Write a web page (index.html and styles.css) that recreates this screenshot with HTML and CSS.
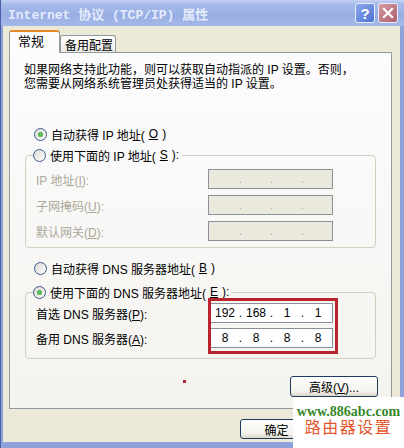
FILE: index.html
```html
<!DOCTYPE html>
<html lang="zh-CN">
<head>
    <meta charset="UTF-8">
    <meta name="viewport" content="width=device-width, initial-scale=1.0">
    <title>Internet 协议 (TCP/IP) 属性</title>
    <link rel="stylesheet" href="styles.css">
</head>
<body>
    <div class="window">
        <div class="titlebar">
            <span class="title">Internet 协议 (TCP/IP) 属性</span>
            <span class="tb-btn help">?</span>
            <span class="tb-btn close">
                <svg width="12" height="12" viewBox="0 0 12 12"><path d="M2 2L10 10M10 2L2 10" stroke="#fff" stroke-width="2.2" stroke-linecap="square"/></svg>
            </span>
        </div>

        <div class="client">
            <div class="tabs">
                <div class="tab active">常规</div>
                <div class="tab">备用配置</div>
            </div>

            <div class="panel">
                <p class="intro">如果网络支持此功能，则可以获取自动指派的 IP 设置。否则，<br>您需要从网络系统管理员处获得适当的 IP 设置。</p>

                <label class="radio-row first"><span class="radio checked"></span>自动获得 IP 地址(<u>O</u>)</label>
                <fieldset class="group">
                    <legend><label class="radio-row"><span class="radio"></span>使用下面的 IP 地址(<u>S</u>):</label></legend>
                    <div class="fields">
                        <div class="field disabled">
                            <span>IP 地址(<u>I</u>):</span>
                            <div class="ipbox"><span></span><i>.</i><span></span><i>.</i><span></span><i>.</i><span></span></div>
                        </div>
                        <div class="field disabled">
                            <span>子网掩码(<u>U</u>):</span>
                            <div class="ipbox"><span></span><i>.</i><span></span><i>.</i><span></span><i>.</i><span></span></div>
                        </div>
                        <div class="field disabled">
                            <span>默认网关(<u>D</u>):</span>
                            <div class="ipbox"><span></span><i>.</i><span></span><i>.</i><span></span><i>.</i><span></span></div>
                        </div>
                    </div>
                </fieldset>

                <label class="radio-row second"><span class="radio"></span>自动获得 DNS 服务器地址(<u>B</u>)</label>
                <fieldset class="group dns-group">
                    <legend><label class="radio-row"><span class="radio checked"></span>使用下面的 DNS 服务器地址(<u>E</u>):</label></legend>
                    <div class="fields dns">
                        <div class="field">
                            <span>首选 DNS 服务器(<u>P</u>):</span>
                            <div class="ipbox"><span>192</span><i>.</i><span>168</span><i>.</i><span>1</span><i>.</i><span>1</span></div>
                        </div>
                        <div class="field">
                            <span>备用 DNS 服务器(<u>A</u>):</span>
                            <div class="ipbox"><span>8</span><i>.</i><span>8</span><i>.</i><span>8</span><i>.</i><span>8</span></div>
                        </div>
                        <div class="highlight"></div>
                    </div>
                </fieldset>

                <div class="actions">
                    <button class="btn wide">高级(<u>V</u>)...</button>
                </div>
                <span class="mark"></span>
            </div>

            <div class="bottom">
                <button class="btn">确定</button>
                <!-- 取消 sits under the watermark in the screenshot -->
                <button class="btn" aria-label="取消"></button>
            </div>
        </div>

        <div class="watermark">
            <div class="wm-url">www.886abc.com</div>
            <div class="wm-name">路由器设置</div>
        </div>
    </div>
</body>
</html>
```

FILE: styles.css
```css
* {
    box-sizing: border-box;
}
body {
    margin: 0;
    font-family: "Liberation Sans", "Noto Sans CJK SC", sans-serif;
    font-size: 12px;
    color: #000;
    text-autospace: no-autospace;
}
.window {
    width: 404px;
    height: 448px;
    display: flex;
    flex-direction: column;
    position: relative;
    background: #8ea3da;
    border-left: 1px solid #4a5fa8;
}
.titlebar {
    height: 26px;
    display: flex;
    align-items: center;
    gap: 3px;
    padding: 0 6px 0 7px;
    background: linear-gradient(#c4d2f3 0, #a6baea 4px, #98aee3 60%, #a5b9e8 100%);
}
.title {
    flex: 1;
    font-family: "Liberation Mono", "Noto Sans CJK SC", monospace;
    font-weight: bold;
    font-size: 13px;
    color: #e4ebfb;
    white-space: nowrap;
}
.tb-btn {
    width: 20px;
    height: 20px;
    border: 1px solid #e9eefb;
    border-radius: 3px;
    display: flex;
    align-items: center;
    justify-content: center;
}
.help {
    background: linear-gradient(135deg, #8aa6ec, #4f73d4);
    color: #fff;
    font-family: "Liberation Sans", sans-serif;
    font-weight: bold;
    font-size: 15px;
}
.close {
    background: linear-gradient(135deg, #d39aa2, #ad5f6d);
}
.client {
    flex: 1;
    margin: 0 4px 6px 2px;
    background: #ece9d8;
    padding: 4px 8px 0 6px;
}
.tabs {
    display: flex;
    align-items: flex-end;
    height: 22px;
}
.tab {
    width: 56px;
    height: 17px;
    padding-left: 4px;
    border: 1px solid #919b9c;
    border-bottom: none;
    border-radius: 3px 3px 0 0;
    background: linear-gradient(#ffffff, #ecebe6);
    line-height: 20px;
    white-space: nowrap;
}
.tab.active {
    width: 51px;
    height: 23px;
    margin-bottom: -1px;
    padding-left: 8px;
    border-top: 2px solid #e68b2c;
    background: #fcfcfe;
    position: relative;
    z-index: 1;
    font-size: 13px;
}
.panel {
    height: 357px;
    border: 1px solid #919b9c;
    background: linear-gradient(#fcfcfe, #f4f3ee);
    padding-top: 10px;
    position: relative;
}
.intro {
    margin: 0 0 0 14px;
    line-height: 14px;
    white-space: nowrap;
}
.radio-row {
    display: flex;
    align-items: center;
    gap: 4px;
    height: 20px;
    white-space: nowrap;
}
.first {
    margin: 33px 0 0 24px;
}
.second {
    margin: 10px 0 0 24px;
}
.radio {
    width: 13px;
    height: 13px;
    border: 1px solid #3a5a88;
    border-radius: 50%;
    background: linear-gradient(135deg, #dcdad2, #ffffff);
    display: flex;
    align-items: center;
    justify-content: center;
}
.radio.checked::after {
    content: "";
    width: 5px;
    height: 5px;
    border-radius: 50%;
    background: radial-gradient(#6fcf6f, #2a9a2a);
}
.group {
    margin: 1px 15px 0;
    padding: 4px 42px 6px 10px;
    border: 1px solid #d0d0bf;
    border-radius: 4px;
    min-width: 0;
}
.dns-group {
    margin-top: 4px;
    padding-top: 1px;
    padding-bottom: 10px;
}
.group legend {
    padding: 0 3px 0 0;
    margin-left: -3px;
}
.fields {
    display: flex;
    flex-direction: column;
    gap: 6px;
}
.fields.dns {
    gap: 5px;
    position: relative;
}
.field {
    display: grid;
    grid-template-columns: 1fr 125px;
    align-items: center;
    height: 20px;
    white-space: nowrap;
}
.field.disabled {
    color: #aca899;
}
.ipbox {
    height: 20px;
    border: 1px solid #8a9098;
    background: #fff;
    display: grid;
    grid-template-columns: 26px 5px 26px 5px 26px 5px 26px;
    padding-left: 3px;
    align-items: center;
    text-align: center;
    font-family: "Liberation Sans", sans-serif;
    font-size: 12px;
    line-height: 18px;
    color: #000;
}
.ipbox i {
    font-style: normal;
}
.disabled .ipbox {
    background: #ebe9dd;
    color: #aca899;
}
.highlight {
    position: absolute;
    left: 172px;
    top: -5px;
    width: 130px;
    height: 56px;
    border: 3px solid #b8232c;
}
.actions {
    display: flex;
    justify-content: flex-end;
    margin: 17px 13px 0 0;
}
.btn {
    font: inherit;
    width: 73px;
    height: 20px;
    padding: 0;
    border: 1px solid #1f3b5e;
    border-radius: 3px;
    background: linear-gradient(#ffffff, #f3f2ec 75%, #d9d6c9);
    color: #000;
}
.btn.wide {
    width: 88px;
    height: 21px;
}
.mark {
    position: absolute;
    left: 173px;
    top: 327px;
    width: 3px;
    height: 3px;
    background: #a52a2f;
}
.bottom {
    display: flex;
    justify-content: flex-end;
    gap: 6px;
    margin-top: 10px;
}
.watermark {
    position: absolute;
    right: 0;
    bottom: 0;
    width: 111px;
    height: 51px;
    background: #fff;
    padding-top: 7px;
    text-align: center;
}
.wm-url {
    font-family: "Liberation Serif", serif;
    font-weight: bold;
    font-size: 14px;
    line-height: 15px;
    color: #37872a;
}
.wm-name {
    font-size: 16px;
    line-height: 17px;
    letter-spacing: 1.5px;
    color: #e4562c;
}
```
